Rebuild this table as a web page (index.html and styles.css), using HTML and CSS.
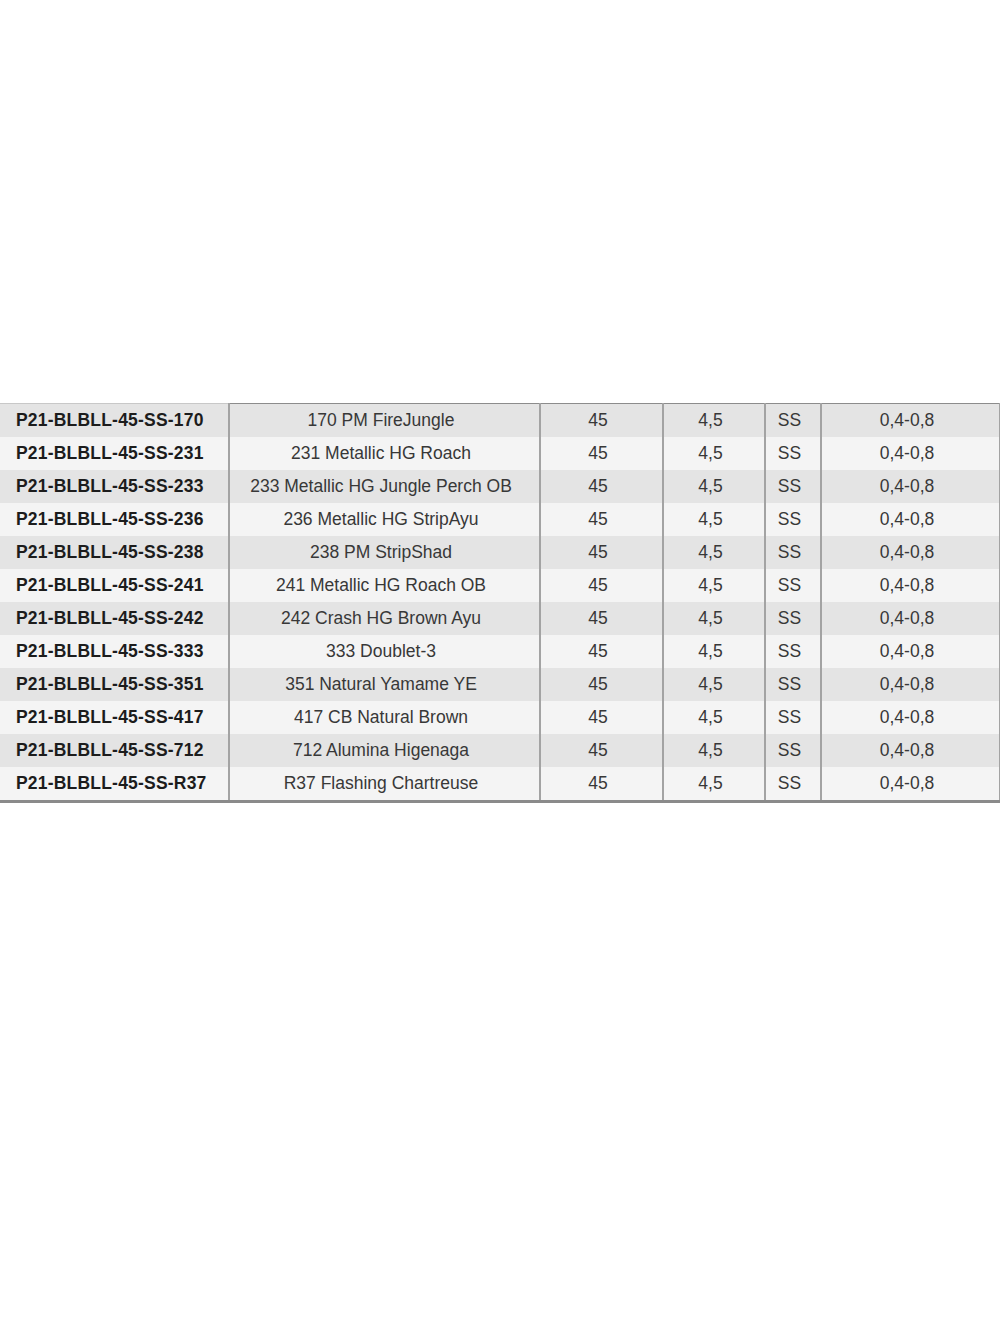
FILE: index.html
```html
<!DOCTYPE html>
<html>
<head>
<meta charset="utf-8">
<link rel="stylesheet" href="styles.css">
</head>
<body>
<div class="page">
  <table class="spec">
    <colgroup>
      <col class="c1"><col class="c2"><col class="c3"><col class="c4"><col class="c5"><col class="c6">
    </colgroup>
    <tbody>
      <tr><td class="code">P21-BLBLL-45-SS-170</td><td>170 PM FireJungle</td><td>45</td><td>4,5</td><td>SS</td><td>0,4-0,8</td></tr>
      <tr><td class="code">P21-BLBLL-45-SS-231</td><td>231 Metallic HG Roach</td><td>45</td><td>4,5</td><td>SS</td><td>0,4-0,8</td></tr>
      <tr><td class="code">P21-BLBLL-45-SS-233</td><td>233 Metallic HG Jungle Perch OB</td><td>45</td><td>4,5</td><td>SS</td><td>0,4-0,8</td></tr>
      <tr><td class="code">P21-BLBLL-45-SS-236</td><td>236 Metallic HG StripAyu</td><td>45</td><td>4,5</td><td>SS</td><td>0,4-0,8</td></tr>
      <tr><td class="code">P21-BLBLL-45-SS-238</td><td>238 PM StripShad</td><td>45</td><td>4,5</td><td>SS</td><td>0,4-0,8</td></tr>
      <tr><td class="code">P21-BLBLL-45-SS-241</td><td>241 Metallic HG Roach OB</td><td>45</td><td>4,5</td><td>SS</td><td>0,4-0,8</td></tr>
      <tr><td class="code">P21-BLBLL-45-SS-242</td><td>242 Crash HG Brown Ayu</td><td>45</td><td>4,5</td><td>SS</td><td>0,4-0,8</td></tr>
      <tr><td class="code">P21-BLBLL-45-SS-333</td><td>333 Doublet-3</td><td>45</td><td>4,5</td><td>SS</td><td>0,4-0,8</td></tr>
      <tr><td class="code">P21-BLBLL-45-SS-351</td><td>351 Natural Yamame YE</td><td>45</td><td>4,5</td><td>SS</td><td>0,4-0,8</td></tr>
      <tr><td class="code">P21-BLBLL-45-SS-417</td><td>417 CB Natural Brown</td><td>45</td><td>4,5</td><td>SS</td><td>0,4-0,8</td></tr>
      <tr><td class="code">P21-BLBLL-45-SS-712</td><td>712 Alumina Higenaga</td><td>45</td><td>4,5</td><td>SS</td><td>0,4-0,8</td></tr>
      <tr><td class="code">P21-BLBLL-45-SS-R37</td><td>R37 Flashing Chartreuse</td><td>45</td><td>4,5</td><td>SS</td><td>0,4-0,8</td></tr>
    </tbody>
  </table>
</div>
</body>
</html>
```
FILE: styles.css
```css
html, body {
  margin: 0;
  padding: 0;
  background: #ffffff;
}
.page {
  padding-top: 403px;
  width: 1000px;
}
.spec {
  width: 1000px;
  table-layout: fixed;
  border-collapse: collapse;
  border-spacing: 0;
  font-family: "Liberation Sans", Arial, sans-serif;
  font-size: 17.5px;
  color: #383838;
  border-top: 1px solid #8c8c8c;
  border-bottom: 3px solid #8a8a8a;
  box-shadow: 0 2px 2px rgba(0,0,0,0.12);
}
.c1 { width: 229px; }
.c2 { width: 311px; }
.c3 { width: 123px; }
.c4 { width: 102px; }
.c5 { width: 56px; }
.c6 { width: 179px; }
.spec td {
  height: 33px;
  padding: 0 7px 0 0;
  text-align: center;
  vertical-align: middle;
  white-space: nowrap;
  border-left: 2px solid #a3a3a3;
}
.spec td:first-child {
  border-left: none;
}
.spec td:last-child {
  border-right: 2px solid #a3a3a3;
}
.spec tr:first-child td:first-child {
  border-top: 1px solid #c8c8c8;
}
.spec tr:nth-child(odd) td {
  background: #e4e4e4;
}
.spec tr:nth-child(even) td {
  background: #f4f4f4;
}
.spec td.code {
  font-weight: bold;
  color: #1c1c1c;
  letter-spacing: 0.2px;
  text-align: left;
  padding: 0 0 0 16px;
}
```
